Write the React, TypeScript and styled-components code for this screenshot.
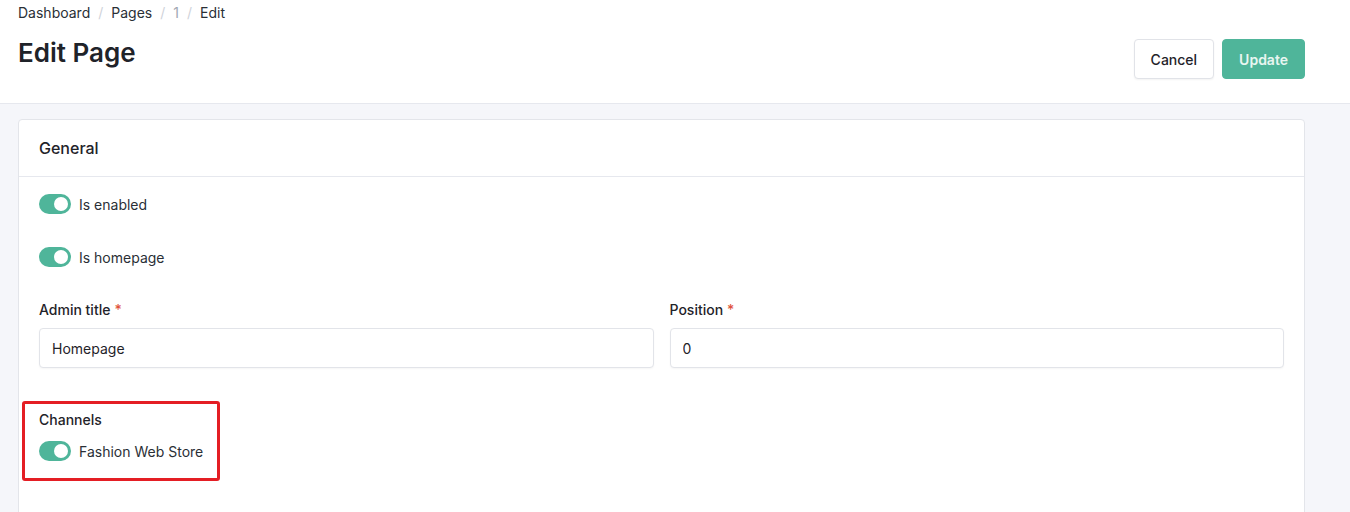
import React, { useState } from 'react';
import styled, { createGlobalStyle } from 'styled-components';

const GlobalStyle = createGlobalStyle`
	body {
		margin: 0;
		font-family: Inter, 'Noto Sans', sans-serif;
		color: #1f2329;
		background: #f5f6fa;
		height: 512px;
		overflow: hidden;
	}
	* {
		box-sizing: border-box;
	}
`;

const Header = styled.header`
	display: flex;
	justify-content: space-between;
	align-items: flex-start;
	height: 104px;
	padding: 3px 45px 0 18px;
	background: #fff;
	border-bottom: 1px solid #e6e8ee;
`;

const Breadcrumb = styled.nav`
	display: flex;
	gap: 8px;
	font-size: 14px;
	line-height: 20px;
	color: #2a2f36;
`;

const Crumb = styled.span<{ $muted?: boolean }>`
	color: ${(p) => (p.$muted ? '#a2a8b3' : '#2a2f36')};
`;

const Separator = styled.span`
	color: #cfd3da;
`;

const Title = styled.h1`
	margin: 13px 0 0;
	font-size: 26px;
	line-height: 34px;
	font-weight: 600;
	color: #1f2329;
`;

const Actions = styled.div`
	display: flex;
	gap: 8px;
	margin-top: 36px;
`;

const Button = styled.button<{ $primary?: boolean }>`
	height: 40px;
	padding: 0 16px;
	font: inherit;
	font-size: 14px;
	font-weight: ${(p) => (p.$primary ? 600 : 500)};
	border-radius: 4px;
	border: 1px solid ${(p) => (p.$primary ? '#4fb59a' : '#e1e3e8')};
	background: ${(p) => (p.$primary ? '#4fb59a' : '#fff')};
	color: ${(p) => (p.$primary ? '#e9f6f1' : '#1f2329')};
	box-shadow: ${(p) => (p.$primary ? 'none' : '0 1px 2px rgba(0,0,0,0.05)')};
	cursor: pointer;
`;

const Main = styled.main`
	padding: 15px 45px 0 18px;
`;

const Card = styled.section`
	background: #fff;
	border: 1px solid #e3e5ea;
	border-radius: 4px;
	min-height: 420px;
`;

const CardHeader = styled.div`
	height: 57px;
	display: flex;
	align-items: center;
	padding: 0 20px;
	border-bottom: 1px solid #e6e8ee;
	font-size: 16px;
	font-weight: 500;
`;

const CardBody = styled.div`
	padding: 17px 20px 20px;
`;

const ToggleRow = styled.label`
	display: flex;
	align-items: center;
	gap: 8px;
	height: 20px;
	margin-bottom: 33px;
	font-size: 14px;
	line-height: 19px;
	color: #2a2f36;
	cursor: pointer;
`;

const Track = styled.span<{ $on: boolean }>`
	position: relative;
	width: 32px;
	height: 20px;
	border-radius: 10px;
	background: ${(p) => (p.$on ? '#4fb59a' : '#d5d8de')};
	flex-shrink: 0;
`;

const Knob = styled.span<{ $on: boolean }>`
	position: absolute;
	top: 3px;
	left: ${(p) => (p.$on ? '15px' : '3px')};
	width: 14px;
	height: 14px;
	border-radius: 50%;
	background: #fff;
`;

const Grid = styled.div`
	display: grid;
	grid-template-columns: 1fr 1fr;
	gap: 16px;
`;

const Field = styled.div`
	display: flex;
	flex-direction: column;
	gap: 8px;
`;

const Label = styled.div`
	font-size: 14px;
	line-height: 20px;
	font-weight: 500;
	color: #1f2329;
`;

const Required = styled.span`
	color: #e0533d;
	margin-left: 4px;
`;

const Input = styled.input`
	height: 40px;
	padding: 0 12px;
	font: inherit;
	font-size: 14px;
	color: #1f2329;
	border: 1px solid #e2e4e9;
	border-radius: 4px;
	box-shadow: 0 1px 2px rgba(0, 0, 0, 0.04);
	outline: none;
	background: #fff;
`;

const Channels = styled.div`
	position: relative;
	margin-top: 42px;
	display: flex;
	flex-direction: column;
	gap: 11px;
`;

const Highlight = styled.div`
	position: absolute;
	top: -9px;
	left: -17px;
	width: 198px;
	height: 80px;
	border: 3px solid #e41e24;
	border-radius: 3px;
	pointer-events: none;
`;

const Toggle = ({ label, on, onChange, last }: { label: string; on: boolean; onChange: () => void; last?: boolean }) => (
	<ToggleRow onClick={onChange} style={last ? { marginBottom: 0 } : undefined}>
		<Track $on={on}>
			<Knob $on={on} />
		</Track>
		{label}
	</ToggleRow>
);

const App = () => {
	const [enabled, setEnabled] = useState(true);
	const [homepage, setHomepage] = useState(true);
	const [fashion, setFashion] = useState(true);
	const [title, setTitle] = useState('Homepage');
	const [position, setPosition] = useState('0');

	return (
		<>
			<GlobalStyle />
			<Header>
				<div>
					<Breadcrumb>
						<Crumb>Dashboard</Crumb>
						<Separator>/</Separator>
						<Crumb>Pages</Crumb>
						<Separator>/</Separator>
						<Crumb $muted>1</Crumb>
						<Separator>/</Separator>
						<Crumb>Edit</Crumb>
					</Breadcrumb>
					<Title>Edit Page</Title>
				</div>
				<Actions>
					<Button>Cancel</Button>
					<Button $primary>Update</Button>
				</Actions>
			</Header>
			<Main>
				<Card>
					<CardHeader>General</CardHeader>
					<CardBody>
						<Toggle label="Is enabled" on={enabled} onChange={() => setEnabled(!enabled)} />
						<Toggle label="Is homepage" on={homepage} onChange={() => setHomepage(!homepage)} />
						<Grid>
							<Field>
								<Label>
									Admin title<Required>*</Required>
								</Label>
								<Input value={title} onChange={(e) => setTitle(e.target.value)} />
							</Field>
							<Field>
								<Label>
									Position<Required>*</Required>
								</Label>
								<Input value={position} onChange={(e) => setPosition(e.target.value)} />
							</Field>
						</Grid>
						<Channels>
							<Highlight />
							<Label>Channels</Label>
							<Toggle label="Fashion Web Store" on={fashion} onChange={() => setFashion(!fashion)} last />
						</Channels>
					</CardBody>
				</Card>
			</Main>
		</>
	);
};

export default App;
